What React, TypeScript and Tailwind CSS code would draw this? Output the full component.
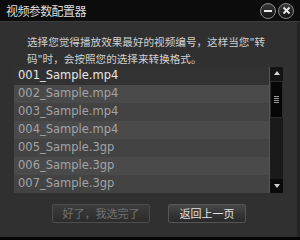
import React from "react";

const rows = [
  "001_Sample.mp4",
  "002_Sample.mp4",
  "003_Sample.mp4",
  "004_Sample.mp4",
  "005_Sample.3gp",
  "006_Sample.3gp",
  "007_Sample.3gp",
];

const cjk = { fontFamily: '"Noto Sans CJK SC", "Noto Sans", sans-serif' };
const latin = { fontFamily: '"DejaVu Sans", Verdana, sans-serif' };

export default function App() {
  return (
    <div className="w-[300px] h-[240px] bg-[#303030] flex flex-col overflow-hidden">
      {/* title bar */}
      <div className="h-[22px] bg-[#0c0c0c] flex items-center justify-between pl-[6px] pr-[6px] border-b border-[#3c3c3c]">
        <span className="text-[12px] leading-none text-[#dcdcdc] tracking-[-0.6px]" style={cjk}>
          视频参数配置器
        </span>
        <div className="flex items-center gap-[2px]">
          <div className="w-[16px] h-[16px] rounded-full border border-[#8a8a8a] bg-gradient-to-b from-[#3a3a3a] to-[#111] flex items-center justify-center">
            <div className="w-[8px] h-[2px] bg-[#e8e8e8]" />
          </div>
          <div className="w-[16px] h-[16px] rounded-full border border-[#8a8a8a] bg-gradient-to-b from-[#3a3a3a] to-[#111] flex items-center justify-center">
            <svg width="9" height="9" viewBox="0 0 9 9">
              <path d="M1.5 1.5 L7.5 7.5 M7.5 1.5 L1.5 7.5" stroke="#ececec" strokeWidth="1.8" />
            </svg>
          </div>
        </div>
      </div>

      <div className="flex-1 flex border-r-[3px] border-[#242424]">
        <div className="flex-1 flex flex-col">
          {/* instructions */}
          <div className="pl-[27px] pr-[20px] mt-[11px] text-[10.6px] leading-[17px] text-[#d0d0d0]" style={cjk}>
            <div className="whitespace-nowrap">选择您觉得播放效果最好的视频编号，这样当您"转</div>
            <div className="whitespace-nowrap">码"时，会按照您的选择来转换格式。</div>
          </div>

          {/* list */}
          <div className="ml-[14px] w-[269px] flex">
            <div className="flex-1 flex flex-col">
              {rows.map((r, i) => (
                <div
                  key={r}
                  className={
                    "h-[18px] flex items-center pl-[4px] text-[11.5px] " +
                    (i === 0
                      ? "bg-[#323232] text-[#e6e6e6]"
                      : i % 2 === 1
                      ? "bg-[#4a4a4a] text-[#a2a4a6]"
                      : "bg-[#434343] text-[#a2a4a6]")
                  }
                  style={latin}
                >
                  {r}
                </div>
              ))}
            </div>
            <div className="w-[14px] flex flex-col bg-[#1b1b1b] border-l border-[#555]">
              <div className="h-[14px] bg-[#141414] flex items-start justify-center pt-[4px]">
                <svg width="6" height="4" viewBox="0 0 6 4">
                  <path d="M3 0 L6 4 L0 4 Z" fill="#d8d8d8" />
                </svg>
              </div>
              <div className="h-[37px] bg-[#070707] border border-[#2c2c2c] flex flex-col items-center justify-center gap-[1px]">
                <div className="w-[5px] h-[1px] bg-[#9a9a9a]" />
                <div className="w-[5px] h-[1px] bg-[#9a9a9a]" />
                <div className="w-[5px] h-[1px] bg-[#9a9a9a]" />
                <div className="w-[5px] h-[1px] bg-[#9a9a9a]" />
              </div>
              <div className="flex-1 bg-[#1a1a1a]" />
              <div className="h-[14px] bg-[#0a0a0a] flex items-start justify-center pt-[5px]">
                <svg width="6" height="4" viewBox="0 0 6 4">
                  <path d="M0 0 L6 0 L3 4 Z" fill="#cfcfcf" />
                </svg>
              </div>
            </div>
          </div>

          {/* buttons */}
          <div className="mt-[11px] flex pl-[52px] gap-[18px]">
            <div
              className="w-[98px] h-[19px] rounded-[2px] border border-[#4c4c4c] bg-gradient-to-b from-[#3c3c3c] via-[#343434] to-[#2c2c2c] flex items-center justify-center text-[11px] text-[#727272]"
              style={cjk}
            >
              好了，我选完了
            </div>
            <div
              className="w-[78px] h-[19px] rounded-[2px] border border-[#555] bg-gradient-to-b from-[#484848] via-[#363636] to-[#2a2a2a] flex items-center justify-center text-[11px] text-[#e2e2e2]"
              style={cjk}
            >
              返回上一页
            </div>
          </div>
          <div className="flex-1" />
        </div>
      </div>
      <div className="h-[3px] bg-[#050505]" />
    </div>
  );
}
